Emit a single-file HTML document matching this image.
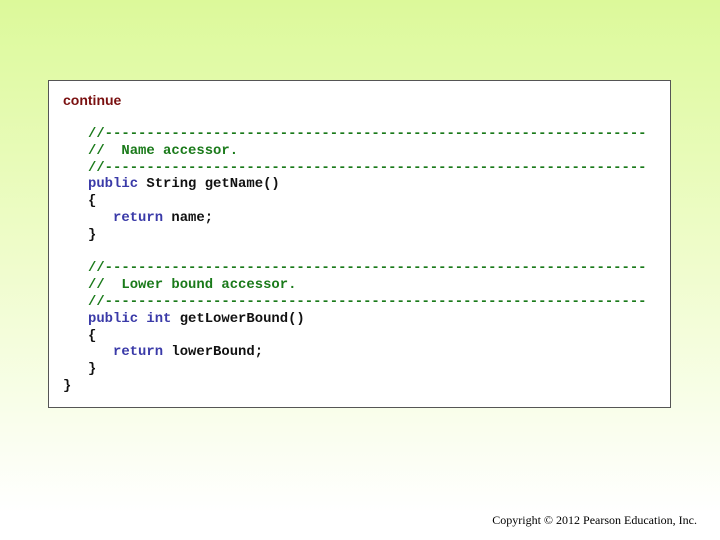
<!DOCTYPE html>
<html><head><style>
body{margin:0;width:720px;height:540px;overflow:hidden;background:linear-gradient(#dcf99a 0%,#eefcc8 45%,#ffffff 95%);position:relative;font-family:"Liberation Sans",sans-serif}
.box{position:absolute;left:48px;top:80px;width:621px;height:326px;background:#fff;border:1px solid #555}
.cont{position:absolute;left:14px;top:11px;font-size:14px;color:#7a1010;font-weight:bold}
pre{position:absolute;left:14px;top:45px;margin:0;font-family:"Liberation Mono",monospace;font-size:13.9px;line-height:16.8px;color:#111;font-weight:bold}
.c{color:#1a7a1a}.k{color:#3a3aa8}
.copy{position:absolute;right:23px;top:513px;font-family:"Liberation Serif",serif;font-size:12px;color:#000}
</style></head><body>
<div class="box"><div class="cont">continue</div>
<pre>   <span class="c">//-----------------------------------------------------------------</span>
   <span class="c">//  Name accessor.</span>
   <span class="c">//-----------------------------------------------------------------</span>
   <span class="k">public</span> String getName()
   {
      <span class="k">return</span> name;
   }

   <span class="c">//-----------------------------------------------------------------</span>
   <span class="c">//  Lower bound accessor.</span>
   <span class="c">//-----------------------------------------------------------------</span>
   <span class="k">public int</span> getLowerBound()
   {
      <span class="k">return</span> lowerBound;
   }
}</pre></div>
<div class="copy">Copyright © 2012 Pearson Education, Inc.</div>
</body></html>
